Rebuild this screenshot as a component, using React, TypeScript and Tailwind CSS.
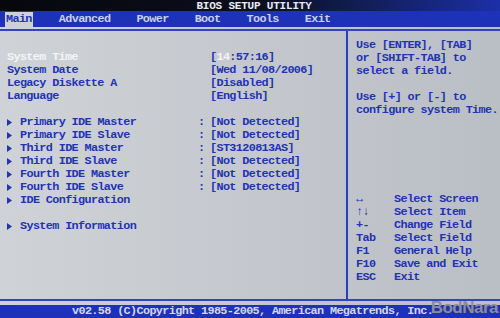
import React from "react";

const mono = "font-['Liberation_Mono','DejaVu_Sans_Mono',monospace] font-bold text-[11.8px] tracking-[-0.63px] leading-[13px]";

const Tri = () => (
  <svg width="5" height="7" viewBox="0 0 5 7" className="mr-[8px] shrink-0">
    <polygon points="0,0 5,3.5 0,7" fill="#2233b4" />
  </svg>
);

const plainRows = [
  { label: "System Date", value: "[Wed 11/08/2006]" },
  { label: "Legacy Diskette A", value: "[Disabled]" },
  { label: "Language", value: "[English]" },
];

const ideRows = [
  { label: "Primary IDE Master", value: "[Not Detected]" },
  { label: "Primary IDE Slave", value: "[Not Detected]" },
  { label: "Third IDE Master", value: "[ST3120813AS]" },
  { label: "Third IDE Slave", value: "[Not Detected]" },
  { label: "Fourth IDE Master", value: "[Not Detected]" },
  { label: "Fourth IDE Slave", value: "[Not Detected]" },
];

const keys = [
  { k: "↔", d: "Select Screen" },
  { k: "↑↓", d: "Select Item" },
  { k: "+-", d: "Change Field" },
  { k: "Tab", d: "Select Field" },
  { k: "F1", d: "General Help" },
  { k: "F10", d: "Save and Exit" },
  { k: "ESC", d: "Exit" },
];

const menu = ["Advanced", "Power", "Boot", "Tools", "Exit"];

export default function App() {
  return (
    <div className={`w-[500px] h-[318px] overflow-hidden flex flex-col bg-gradient-to-r from-[#cfd2d6] to-[#babec5] text-[#2233b4] ${mono}`}>
      {/* title */}
      <div className="h-[11px] bg-gradient-to-r from-[#07080d] via-[#0a0d1c] to-[#1b2fa8] flex justify-center items-end text-[#e9ebf2] text-[11px] tracking-[-0.2px] leading-[10px] pl-[8px]">
        BIOS SETUP UTILITY
      </div>

      {/* menu */}
      <div className="h-[16px] bg-[#1d31b9] flex items-center pl-[5px] gap-[26px] text-[#c9d0ea]">
        <span className="bg-[#cdd0d6] text-[#2233b4] px-[1px] leading-[15px]">Main</span>
        {menu.map((m) => (
          <span key={m}>{m}</span>
        ))}
      </div>

      <div className="h-[2px]" />
      <div className="h-[2px] bg-[#3142c2]" />

      {/* body */}
      <div className="flex-1 flex">
        <div className="w-[348px] border-r-2 border-[#2a3cc2] pt-[20px] pl-[7px]">
          <div className="flex">
            <span className="w-[203px] text-[#f4f5f7]">System Time</span>
            <span>
              [<span className="text-[#f4f5f7]">14</span>:57:16]
            </span>
          </div>
          {plainRows.map((r) => (
            <div key={r.label} className="flex">
              <span className="w-[203px]">{r.label}</span>
              <span>{r.value}</span>
            </div>
          ))}
          <div className="h-[13px]" />
          {ideRows.map((r) => (
            <div key={r.label} className="flex items-center">
              <Tri />
              <span className="w-[178px]">{r.label}</span>
              <span className="w-[12px]">:</span>
              <span>{r.value}</span>
            </div>
          ))}
          <div className="flex items-center">
            <Tri />
            <span>IDE Configuration</span>
          </div>
          <div className="h-[13px]" />
          <div className="flex items-center">
            <Tri />
            <span>System Information</span>
          </div>
        </div>

        <div className="flex-1 flex flex-col pl-[8px] pt-[8px]">
          <div>Use [ENTER], [TAB]</div>
          <div>or [SHIFT-TAB] to</div>
          <div>select a field.</div>
          <div className="h-[13px]" />
          <div>Use [+] or [-] to</div>
          <div className="whitespace-nowrap">configure system Time.</div>
          <div className="mt-[76px]">
            {keys.map((r) => (
              <div key={r.d} className="flex">
                <span className="w-[38px]">{r.k}</span>
                <span>{r.d}</span>
              </div>
            ))}
          </div>
        </div>
      </div>

      <div className="h-[2px] bg-[#3142c2]" />
      <div className="h-[4px]" />

      {/* footer */}
      <div className="h-[13px] bg-[#1d31b9] flex items-center pl-[72px] text-[#d3d8ee] leading-[13px] relative">
        <span>v02.58 (C)Copyright 1985-2005, American Megatrends, Inc.</span>
        <span className="absolute right-[2px] -top-[7px] font-['Liberation_Sans',sans-serif] font-bold text-[17px] leading-[19px] text-[#8e8e92] tracking-[-0.5px]">
          BodNara
        </span>
      </div>
    </div>
  );
}
